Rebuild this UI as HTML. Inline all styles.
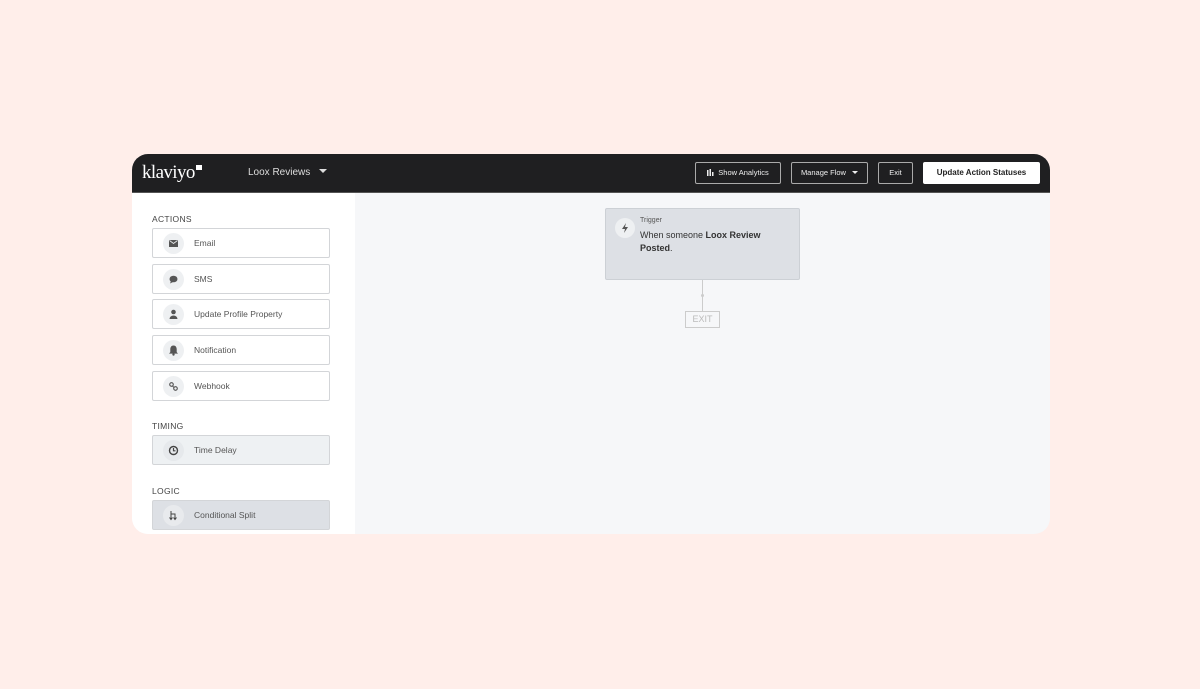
<!DOCTYPE html>
<html><head><style>
*{margin:0;padding:0;box-sizing:border-box}
body{width:1200px;height:689px;background:#ffeeea;font-family:"Liberation Sans",sans-serif;position:relative;overflow:hidden}
.frame{position:absolute;left:132px;top:154px;width:918px;height:380px;border-radius:16px;overflow:hidden;background:#f6f7f9}
.hdr{position:absolute;left:0;top:0;width:918px;height:39px;background:#1f1f21;border-bottom:1px solid #555}
.logo{position:absolute;left:10px;top:8px;color:#fff;font-family:"Liberation Serif",serif;font-size:19px;letter-spacing:-0.6px}
.logo i{position:absolute;right:-7px;top:3px;width:6px;height:5px;background:#fff}
.flow{position:absolute;left:116px;top:13px;color:#ddd;font-size:10px}
.flow b{display:inline-block;margin-left:9px;border-left:4px solid transparent;border-right:4px solid transparent;border-top:4px solid #ddd;vertical-align:2px}
.btn{position:absolute;top:8px;height:22px;border:1px solid #aaa;border-radius:2px;color:#eee;font-size:7.5px;line-height:20px;text-align:center}
.side{position:absolute;left:0;top:39px;width:223px;height:341px;background:#fff}
.lbl{position:absolute;left:20px;font-size:8.5px;color:#444;letter-spacing:.3px}
.it{position:absolute;left:20px;width:178px;height:30px;border:1px solid #d3d5d8;border-radius:2px;background:#fff;font-size:8.5px;color:#555}
.it .ic{position:absolute;left:10px;top:4px;width:21px;height:21px;border-radius:50%;background:#eef0f2}
.it span{position:absolute;left:41px;top:9px}
.card{position:absolute;left:473px;top:54px;width:195px;height:72px;background:#dde0e5;border:1px solid #ccd0d5;border-radius:2px}
</style></head><body>
<div class="frame">
 <div class="hdr">
  <div class="logo">klaviyo<i></i></div>
  <div class="flow">Loox Reviews<b></b></div>
  <div class="btn" style="left:563px;width:86px"><svg width="8" height="7" style="vertical-align:-1px;margin-right:3px"><rect x="0" y="1" width="1.5" height="6" fill="#eee"/><rect x="2.5" y="0" width="1.5" height="7" fill="#eee"/><rect x="5" y="3" width="1.5" height="4" fill="#eee"/></svg>Show Analytics</div>
  <div class="btn" style="left:659px;width:77px">Manage Flow <span style="display:inline-block;margin-left:4px;border-left:3px solid transparent;border-right:3px solid transparent;border-top:3px solid #eee;vertical-align:1px"></span></div>
  <div class="btn" style="left:746px;width:35px">Exit</div>
  <div class="btn" style="left:791px;width:117px;background:#fff;color:#222;font-weight:bold;font-size:8px;border-color:#fff">Update Action Statuses</div>
 </div>
 <div class="side">
  <div class="lbl" style="top:21px">ACTIONS</div>
  <div class="it" style="top:35px"><div class="ic"><svg width="21" height="21"><rect x="6" y="7" width="9" height="7" fill="#555"/><path d="M6.5 7.5l4 3 4-3" stroke="#eef0f2" fill="none" stroke-width=".8"/></svg></div><span>Email</span></div>
  <div class="it" style="top:71px"><div class="ic"><svg width="21" height="21"><ellipse cx="10.5" cy="10" rx="4" ry="3.3" fill="#555"/><path d="M8 12l-1 2.5 3-1.5z" fill="#555"/></svg></div><span>SMS</span></div>
  <div class="it" style="top:106px"><div class="ic"><svg width="21" height="21"><circle cx="10.5" cy="8" r="2.3" fill="#555"/><path d="M6.5 15a4 3.5 0 0 1 8 0z" fill="#555"/></svg></div><span>Update Profile Property</span></div>
  <div class="it" style="top:142px"><div class="ic"><svg width="21" height="21"><path d="M10.5 5.5c-2.2 0-3.2 1.8-3.2 3.8v2.8l-1.3 1.5h9l-1.3-1.5V9.3c0-2-1-3.8-3.2-3.8z" fill="#555"/><circle cx="10.5" cy="14.5" r="1.2" fill="#555"/></svg></div><span>Notification</span></div>
  <div class="it" style="top:178px"><div class="ic"><svg width="21" height="21"><circle cx="8.5" cy="8.5" r="1.8" stroke="#555" fill="none" stroke-width="1.1"/><circle cx="12.5" cy="12.5" r="1.8" stroke="#555" fill="none" stroke-width="1.1"/><path d="M9.5 10l1.5 1.5" stroke="#555"/></svg></div><span>Webhook</span></div>
  <div class="lbl" style="top:228px">TIMING</div>
  <div class="it" style="top:242px;background:#eef1f3"><div class="ic" style="background:#e6e9ec"><svg width="21" height="21"><circle cx="10.5" cy="10.5" r="4" stroke="#444" fill="none" stroke-width="1.4"/><path d="M10.5 8v2.8h2" stroke="#444" fill="none" stroke-width="1.2"/></svg></div><span>Time Delay</span></div>
  <div class="lbl" style="top:293px">LOGIC</div>
  <div class="it" style="top:307px;background:#dde0e5"><div class="ic" style="background:#e8eaed"><svg width="21" height="21"><path d="M8 6v8M8 9h4v5M6.5 12.5l1.5 2 1.5-2M10.5 12.5l1.5 2 1.5-2" stroke="#444" fill="none" stroke-width="1"/></svg></div><span>Conditional Split</span></div>
 </div>
 <div class="card">
  <div style="position:absolute;left:9px;top:9px;width:20px;height:20px;border-radius:50%;background:#eef0f2"><svg width="20" height="20"><path d="M11 5l-4 6h3l-1 4 4-6h-3z" fill="#555"/></svg></div>
  <div style="position:absolute;left:34px;top:8px;font-size:7px;color:#555">Trigger</div>
  <div style="position:absolute;left:34px;top:20px;font-size:9px;color:#333;line-height:13px;width:150px">When someone <b>Loox Review Posted</b>.</div>
 </div>
 <div style="position:absolute;left:570px;top:126px;width:1px;height:31px;background:#ccc"></div>
 <div style="position:absolute;left:569px;top:140px;width:3px;height:3px;border-radius:50%;background:#ccc"></div>
 <div style="position:absolute;left:553px;top:157px;width:35px;height:17px;border:1px solid #ccc;background:#f6f7f9;color:#bbb;font-size:9px;text-align:center;line-height:15px">EXIT</div>
</div>
</body></html>
